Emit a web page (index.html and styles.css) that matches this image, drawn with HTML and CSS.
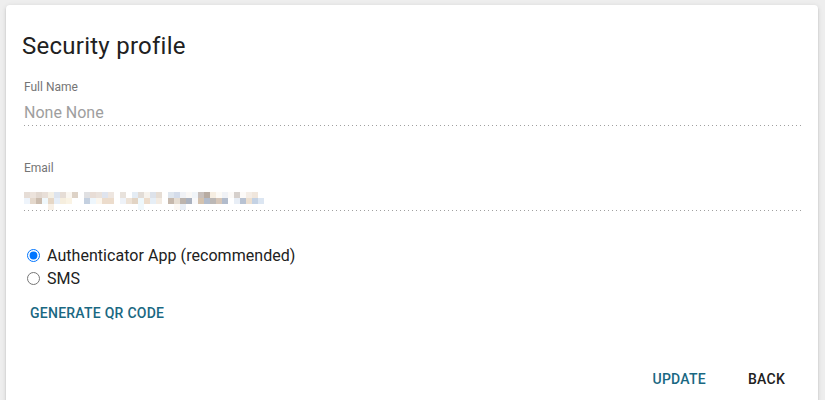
FILE: index.html
```html
<!DOCTYPE html>
<html lang="en">
<head>
    <meta charset="UTF-8">
    <meta name="viewport" content="width=device-width, initial-scale=1.0">
    <title>Security profile</title>
    <link rel="stylesheet" href="styles.css">
</head>
<body>
    <div class="card">
        <h1 class="card-title">Security profile</h1>
        <form class="profile-form" onsubmit="return false;">
            <div class="field">
                <label class="field-label" for="fullname">Full Name</label>
                <input class="field-input" type="text" id="fullname" value="None None" readonly>
            </div>
            <div class="field field-last">
                <label class="field-label">Email</label>
                <div class="field-value">
                    <svg class="blurred" width="248" height="28" viewBox="0 0 248 28">
                        <!-- pixelated (redacted) address -->
                        <g transform="translate(0 2)">
                            <rect x="0" y="8" width="6" height="6" fill="#e6ddd6"/>
                            <rect x="6" y="8" width="6" height="6" fill="#ece3dc"/>
                            <rect x="12" y="8" width="6" height="6" fill="#e2d8d0"/>
                            <rect x="18" y="8" width="6" height="6" fill="#e8dfd8"/>
                            <rect x="24" y="8" width="6" height="6" fill="#f4efe4"/>
                            <rect x="30" y="8" width="6" height="6" fill="#dde4ee"/>
                            <rect x="36" y="8" width="6" height="6" fill="#e6ddd6"/>
                            <rect x="42" y="8" width="6" height="6" fill="#faf6f0"/>
                            <rect x="48" y="8" width="6" height="6" fill="#ddd2c6"/>
                            <rect x="0" y="14" width="6" height="6" fill="#eef4fb"/>
                            <rect x="6" y="14" width="6" height="6" fill="#e4d8cc"/>
                            <rect x="12" y="14" width="6" height="6" fill="#cbbcae"/>
                            <rect x="18" y="14" width="6" height="6" fill="#f0f8fc"/>
                            <rect x="24" y="14" width="6" height="6" fill="#e6d7c6"/>
                            <rect x="30" y="14" width="6" height="6" fill="#e6eef8"/>
                            <rect x="36" y="14" width="6" height="6" fill="#f6eede"/>
                            <rect x="42" y="14" width="6" height="6" fill="#faf3e4"/>
                            <rect x="24" y="20" width="6" height="6" fill="#f8f0e6"/>

                            <rect x="60" y="8" width="6" height="6" fill="#e0e0e2"/>
                            <rect x="66" y="8" width="6" height="6" fill="#e8ddd6"/>
                            <rect x="72" y="8" width="6" height="6" fill="#eae2dc"/>
                            <rect x="78" y="8" width="6" height="6" fill="#dfe4ee"/>
                            <rect x="84" y="8" width="6" height="6" fill="#eee6e0"/>
                            <rect x="60" y="14" width="6" height="6" fill="#c4d0e0"/>
                            <rect x="66" y="14" width="6" height="6" fill="#eef6fc"/>
                            <rect x="72" y="14" width="6" height="6" fill="#fbf6ee"/>
                            <rect x="78" y="14" width="6" height="6" fill="#ecdccc"/>
                            <rect x="84" y="14" width="6" height="6" fill="#ecdccc"/>

                            <rect x="96" y="8" width="6" height="6" fill="#e8e2dc"/>
                            <rect x="102" y="8" width="6" height="6" fill="#ffffff"/>
                            <rect x="108" y="8" width="6" height="6" fill="#e4ecf4"/>
                            <rect x="114" y="8" width="6" height="6" fill="#e2dcd6"/>
                            <rect x="120" y="8" width="6" height="6" fill="#f6f2ec"/>
                            <rect x="126" y="8" width="6" height="6" fill="#dde2ea"/>
                            <rect x="132" y="8" width="6" height="6" fill="#e6ddd4"/>
                            <rect x="96" y="14" width="6" height="6" fill="#eef2f8"/>
                            <rect x="102" y="14" width="6" height="6" fill="#ede2d6"/>
                            <rect x="108" y="14" width="6" height="6" fill="#e2d4c4"/>
                            <rect x="114" y="14" width="6" height="6" fill="#eef8fc"/>
                            <rect x="120" y="14" width="6" height="6" fill="#eddccb"/>
                            <rect x="126" y="14" width="6" height="6" fill="#e6eef6"/>
                            <rect x="132" y="14" width="6" height="6" fill="#f3ebe2"/>
                            <rect x="114" y="20" width="6" height="6" fill="#f0f8fc"/>

                            <rect x="144" y="8" width="6" height="6" fill="#dfe6ee"/>
                            <rect x="150" y="8" width="6" height="6" fill="#d4dcea"/>
                            <rect x="156" y="8" width="6" height="6" fill="#f0f2f6"/>
                            <rect x="162" y="8" width="6" height="6" fill="#faf8f6"/>
                            <rect x="168" y="8" width="6" height="6" fill="#f0f4f8"/>
                            <rect x="174" y="8" width="6" height="6" fill="#c8c0bc"/>
                            <rect x="180" y="8" width="6" height="6" fill="#b8aca2"/>
                            <rect x="186" y="8" width="6" height="6" fill="#f6eee2"/>
                            <rect x="192" y="8" width="6" height="6" fill="#fcfaf6"/>
                            <rect x="198" y="8" width="6" height="6" fill="#f0f2f6"/>
                            <rect x="204" y="8" width="6" height="6" fill="#fcfaf8"/>
                            <rect x="210" y="8" width="6" height="6" fill="#d6d0cc"/>
                            <rect x="216" y="8" width="6" height="6" fill="#fcfaf8"/>
                            <rect x="222" y="8" width="6" height="6" fill="#f4ede6"/>
                            <rect x="228" y="8" width="6" height="6" fill="#f0e6dc"/>
                            <rect x="144" y="14" width="6" height="6" fill="#c6b8ac"/>
                            <rect x="150" y="14" width="6" height="6" fill="#e6ddd2"/>
                            <rect x="156" y="14" width="6" height="6" fill="#bcb4ae"/>
                            <rect x="162" y="14" width="6" height="6" fill="#aab2c0"/>
                            <rect x="168" y="14" width="6" height="6" fill="#f8f8fa"/>
                            <rect x="174" y="14" width="6" height="6" fill="#d4c2ae"/>
                            <rect x="180" y="14" width="6" height="6" fill="#b2bccc"/>
                            <rect x="186" y="14" width="6" height="6" fill="#bcb8b6"/>
                            <rect x="192" y="14" width="6" height="6" fill="#d6c6b8"/>
                            <rect x="198" y="14" width="6" height="6" fill="#b2bccc"/>
                            <rect x="204" y="14" width="6" height="6" fill="#ffffff"/>
                            <rect x="210" y="14" width="6" height="6" fill="#e8eef6"/>
                            <rect x="216" y="14" width="6" height="6" fill="#b8c2d2"/>
                            <rect x="222" y="14" width="6" height="6" fill="#ecdfd0"/>
                            <rect x="228" y="14" width="6" height="6" fill="#c4d2e4"/>
                            <rect x="234" y="14" width="6" height="6" fill="#dce6f2"/>
                            <rect x="150" y="20" width="6" height="6" fill="#fcf8f4"/>
                            <rect x="156" y="20" width="6" height="6" fill="#e8eef6"/>
                        </g>
                    </svg>
                </div>
            </div>

            <div class="radio-group">
                <label class="radio">
                    <input type="radio" name="method" value="app" checked>
                    <span>Authenticator App (recommended)</span>
                </label>
                <label class="radio">
                    <input type="radio" name="method" value="sms">
                    <span>SMS</span>
                </label>
            </div>

            <button type="button" class="btn btn-primary">Generate QR Code</button>
        </form>
        <div class="card-actions">
            <button type="button" class="btn btn-primary">Update</button>
            <button type="button" class="btn">Back</button>
        </div>
    </div>
</body>
</html>
```

FILE: styles.css
```css
body {
    font-family: Roboto, "Liberation Sans", sans-serif;
    margin: 0;
    padding: 5px 7px 0 6px;
    background-color: #eeeeee;
    color: #212121;
}
.card {
    background: #fff;
    border-radius: 4px;
    box-shadow: 0 2px 2px 0 rgba(0, 0, 0, 0.14), 0 1px 5px 0 rgba(0, 0, 0, 0.12);
    padding: 25px 17px 40px 18px;
    min-height: 420px;
    box-sizing: border-box;
}
.card-title {
    font-size: 24px;
    line-height: 32px;
    font-weight: 400;
    letter-spacing: 0.25px;
    margin: 0 0 17px -2px;
    color: #212121;
}
.field {
    margin-bottom: 34px;
    padding-bottom: 1px;
    background: linear-gradient(to right, #a0a0a0 1px, transparent 1px) repeat-x left bottom;
    background-size: 4px 1px;
}
.field-last {
    margin-bottom: 33px;
}
.field-label {
    display: block;
    font-size: 12px;
    line-height: 16px;
    color: #757575;
    margin-bottom: 6px;
}
.field-input {
    display: block;
    width: 100%;
    border: none;
    outline: none;
    padding: 0;
    font-family: inherit;
    font-size: 16px;
    line-height: 24px;
    height: 24px;
    color: #9e9e9e;
    background: transparent;
}
.field-value {
    height: 28px;
}
.blurred {
    display: block;
}
.radio-group {
    display: flex;
    flex-direction: column;
}
.radio {
    display: flex;
    align-items: center;
    font-size: 16px;
    line-height: 23px;
    letter-spacing: 0.05px;
    color: #212121;
}
.radio input {
    margin: 0 7px 0 3px;
    width: 13px;
    height: 13px;
}
.btn {
    font-family: inherit;
    font-size: 14px;
    font-weight: 500;
    letter-spacing: 0.25px;
    text-transform: uppercase;
    height: 36px;
    line-height: 36px;
    padding: 0 16px;
    border: none;
    background: transparent;
    color: #212121;
    cursor: pointer;
}
.btn-primary {
    color: #1a6882;
}
.profile-form .btn {
    margin-top: 5px;
    padding: 0 6px;
}
.card-actions {
    display: flex;
    justify-content: flex-end;
    gap: 10px;
    margin-top: 30px;
}
```
